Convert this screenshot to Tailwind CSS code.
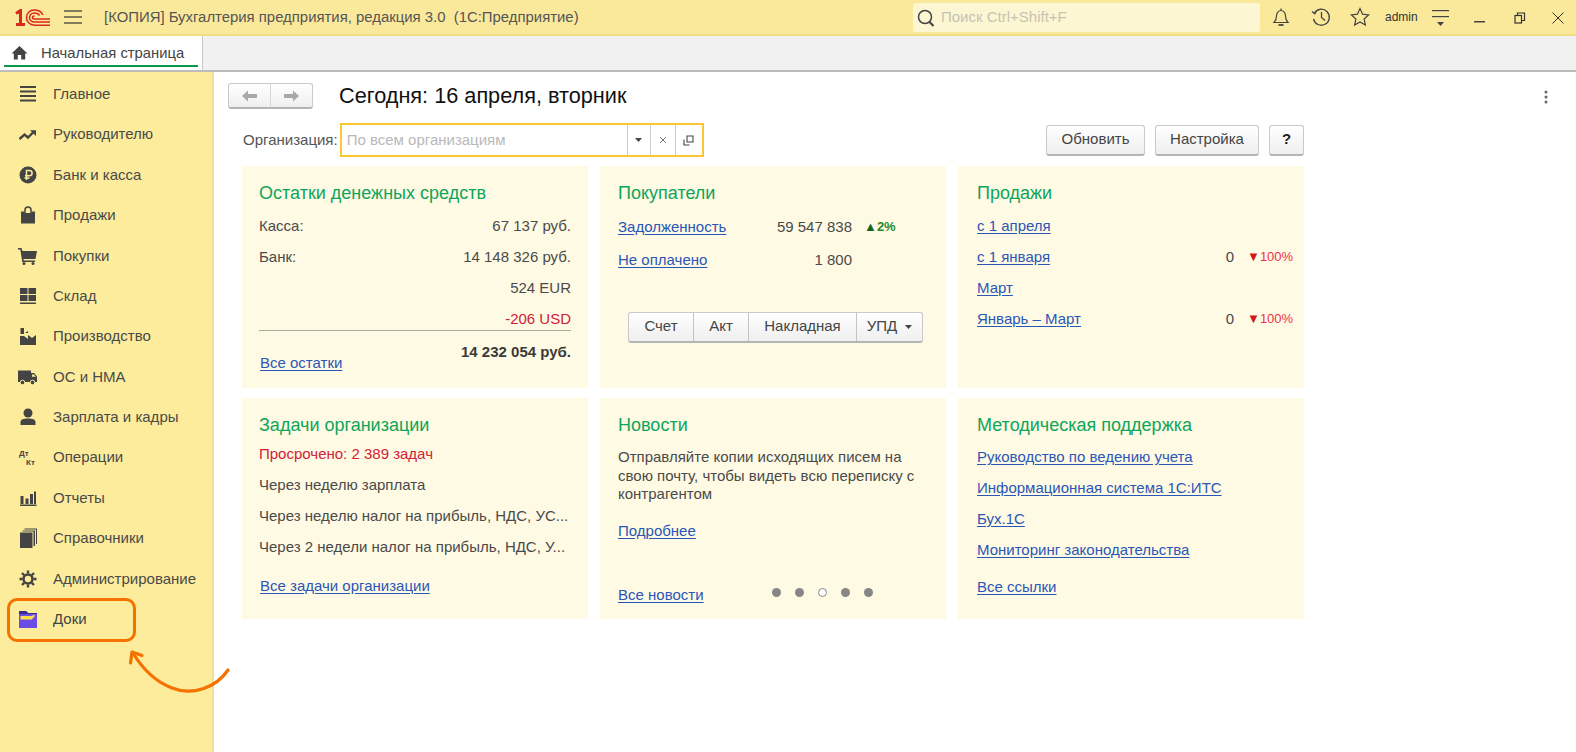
<!DOCTYPE html>
<html lang="ru">
<head>
    <meta charset="UTF-8">
    <title>Бухгалтерия предприятия</title>
    <script src="https://cdn.jsdelivr.net/npm/@tailwindcss/browser@4"></script>
</head>
<body class="relative w-[1576px] h-[752px] overflow-hidden bg-white font-['Liberation_Sans',Arial,sans-serif] text-[15px] text-[#4a4a4a]">

    <!-- шапка -->
    <header class="h-[36px] bg-[#fbe99b] border-b-2 border-[#efdc83] flex items-center">
        <svg class="ml-[15px] w-[35px] h-[17px]" viewBox="0 0 35 17" fill="none" stroke="#d9281e" stroke-width="1.500">
            <path d="M1 4.500L5.500 1.500V15M1 15.500h9" stroke-width="3"/>
            <path d="M28 6C26.500 3 23.500 1 19.500 1 14.500 1 11.500 4.500 11.500 8.500s3 7.700 8 7.700H35"/>
            <path d="M24.500 6.500c-1-1.500-2.800-2.500-5-2.500-3 0-5 2-5 4.500s2 4.500 5 4.500H35"/>
            <path d="M19.500 7c-1 0-2 .6-2 1.500s1 1.500 2 1.500H35"/>
        </svg>
        <svg class="ml-[14px] w-[18px] h-[14px]" viewBox="0 0 18 14" stroke="#5a5a48" stroke-width="1.500"><path d="M0 1h18M0 7h18M0 13h18"/></svg>
        <div class="ml-[22px] w-[800px] text-[14.900px] text-[#555] whitespace-pre">[КОПИЯ] Бухгалтерия предприятия, редакция 3.0  (1С:Предприятие)</div>
        <div class="absolute left-[913px] top-[3px] w-[347px] h-[29px] bg-[#fdf6d2] rounded-[3px] flex items-center">
            <svg class="ml-[3px] w-[20px] h-[20px]" viewBox="0 0 20 20" fill="none" stroke="#444" stroke-width="1.500"><circle cx="9" cy="9" r="6.500"/><path d="M13.500 14l4 4" stroke-width="2.200"/></svg>
            <span class="ml-[5px] text-[#c4c4b4]">Поиск Ctrl+Shift+F</span>
        </div>
        <svg class="absolute left-[1271px] top-[7px] w-[20px] h-[20px]" viewBox="0 0 20 20" fill="none" stroke="#444" stroke-width="1.200"><path d="M3 15.500h14c-2-2-2.500-3.500-2.500-6.500 0-3-2-5.500-4.500-5.500S5.500 6 5.500 9c0 3-.5 4.500-2.500 6.500z"/><path d="M10 1.500v2"/><path d="M7.500 18h5" stroke-width="1.800"/></svg>
        <svg class="absolute left-[1311px] top-[7px] w-[20px] h-[20px]" viewBox="0 0 20 20" fill="none" stroke="#444" stroke-width="1.300"><path d="M3.500 6A8 8 0 1 1 2.500 12"/><path d="M1 4.500l2.800 2.200L5.800 3.500" /><path d="M10.500 5v5.500l3.500 3"/></svg>
        <svg class="absolute left-[1350px] top-[7px] w-[20px] h-[20px]" viewBox="0 0 20 20" fill="none" stroke="#444" stroke-width="1.200"><path d="M10 1.500l2.600 5.700 6 .7-4.500 4.100 1.300 6.100L10 15l-5.400 3.100 1.300-6.100L1.400 7.900l6-.7z"/></svg>
        <span class="absolute left-[1385px] top-[9px] text-[12px] leading-[16px] text-[#333]">admin</span>
        <svg class="absolute left-[1431px] top-[9px] w-[20px] h-[20px]" viewBox="0 0 20 20" fill="#444"><rect x="1" y="1" width="17" height="1.200"/><rect x="1" y="7" width="17" height="1.200"/><path d="M6 13h7l-3.500 4z"/></svg>
        <svg class="absolute left-[1474px] top-[20px] w-[12px] h-[4px]" viewBox="0 0 12 4" fill="#444"><rect y="1" width="11" height="1.500"/></svg>
        <svg class="absolute left-[1514px] top-[12px] w-[12px] h-[12px]" viewBox="0 0 12 12" fill="none" stroke="#333" stroke-width="1.200"><rect x="1" y="3.500" width="6.500" height="7.500"/><path d="M3.500 3.500V1H10.500v7.500H7.500"/></svg>
        <svg class="absolute left-[1552px] top-[12px] w-[12px] h-[12px]" viewBox="0 0 12 12" stroke="#333" stroke-width="1"><path d="M.5.500l11 11M11.500.500l-11 11"/></svg>
    </header>

    <!-- вкладки -->
    <div class="h-[36px] bg-[#f1f1f1] border-b-2 border-[#bcbcbc] flex">
        <div class="w-[203px] h-[34px] bg-white border-r border-[#c8c8c8] relative flex items-center">
            <svg class="ml-[11px] -mt-[2px] w-[17px] h-[15px]" viewBox="0 0 17 15" fill="#444"><path d="M8.500 1L0.500 8.500h2.300V14.500h4V10h3.400v4.500h4V8.500h2.300z"/></svg>
            <span class="ml-[13px] text-[14.800px] text-[#444]">Начальная страница</span>
            <div class="absolute left-[4px] right-[4px] bottom-[3px] h-[2px] bg-[#0b9a4a]"></div>
        </div>
    </div>

    <div class="flex h-[680px]">
        <!-- панель разделов -->
        <nav class="w-[214px] shrink-0 bg-[#fcec9c] border-r-2 border-[#efe09a] pt-[2px]">
            <div class="h-[40.400px] flex items-center">
                <svg class="ml-[19px] w-[18px] h-[18px]" viewBox="0 0 18 18" fill="#444"><path d="M1 1h16v2H1zM1 5.500h16v2H1zM1 10h16v2H1zM1 14.500h16v2H1z"/></svg>
                <span class="ml-[16px]">Главное</span>
            </div>
            <div class="h-[40.400px] flex items-center">
                <svg class="ml-[19px] w-[18px] h-[18px]" viewBox="0 0 18 18" fill="none" stroke="#444" stroke-width="2.400"><path d="M0.500 13l5-4.500 3.500 3 6-6"/><path d="M11 4.200h6V10" fill="#444" stroke-width="0"/></svg>
                <span class="ml-[16px]">Руководителю</span>
            </div>
            <div class="h-[40.400px] flex items-center">
                <svg class="ml-[19px] w-[18px] h-[18px]" viewBox="0 0 18 18"><circle cx="9" cy="9" r="8.500" fill="#444"/><path d="M7.500 14V4.500h3a2.500 2.500 0 0 1 0 5.200h-4.500M5.500 12h5" fill="none" stroke="#fcec9c" stroke-width="1.500"/></svg>
                <span class="ml-[16px]">Банк и касса</span>
            </div>
            <div class="h-[40.400px] flex items-center">
                <svg class="ml-[19px] w-[18px] h-[18px]" viewBox="0 0 18 18"><path d="M2 5.500h3.500V7h7V5.500H16V17.500H2z" fill="#444"/><path d="M6 9V4a3 3 0 0 1 6 0v5" fill="none" stroke="#444" stroke-width="1.500"/></svg>
                <span class="ml-[16px]">Продажи</span>
            </div>
            <div class="h-[40.400px] flex items-center">
                <svg class="ml-[18px] w-[19px] h-[18px]" viewBox="0 0 19 18" fill="#444"><path d="M0 1h3.500l1 3H19l-1.500 8H5.500l.3 1.500H17V15H4.300L2.300 2.500H0z"/><circle cx="6" cy="16.500" r="1.500"/><circle cx="15" cy="16.500" r="1.500"/></svg>
                <span class="ml-[16px]">Покупки</span>
            </div>
            <div class="h-[40.400px] flex items-center">
                <svg class="ml-[19px] w-[18px] h-[18px]" viewBox="0 0 18 18" fill="#444"><path d="M1 1h7.500v6H1zM9.500 1H17v6H9.500zM1 8h7.500v6H1zM9.500 8H17v6H9.500zM1 15.500h16V17H1z"/></svg>
                <span class="ml-[16px]">Склад</span>
            </div>
            <div class="h-[40.400px] flex items-center">
                <svg class="ml-[19px] w-[18px] h-[18px]" viewBox="0 0 18 18" fill="#444"><path d="M1.500 0h3.500v6H1.500zM1 17V8h4l4 3V7l4 3 4-3v10z"/><path d="M6 5l3-2v2z"/></svg>
                <span class="ml-[16px]">Производство</span>
            </div>
            <div class="h-[40.400px] flex items-center">
                <svg class="ml-[18px] w-[19px] h-[18px]" viewBox="0 0 19 18"><path d="M0 2.500h13V5h3l3 3.500v5.500H0z" fill="#444"/><path d="M14 6.500h2l1.800 2.200H14z" fill="#fcec9c"/><circle cx="4.500" cy="14.500" r="2.300" fill="#444" stroke="#fcec9c"/><circle cx="14.500" cy="14.500" r="2.300" fill="#444" stroke="#fcec9c"/></svg>
                <span class="ml-[16px]">ОС и НМА</span>
            </div>
            <div class="h-[40.400px] flex items-center">
                <svg class="ml-[19px] w-[18px] h-[18px]" viewBox="0 0 18 18" fill="#444"><circle cx="9" cy="5" r="4.500"/><path d="M1.500 17v-3c0-2.500 3-3.500 7.500-3.500s7.500 1 7.500 3.500v3z"/></svg>
                <span class="ml-[16px]">Зарплата и кадры</span>
            </div>
            <div class="h-[40.400px] flex items-center">
                <div class="ml-[19px] w-[18px] h-[18px] relative text-[8px] leading-[8px] font-bold text-[#444]">
                    <span class="absolute left-0 top-[1px]">Дт</span>
                    <span class="absolute left-[7px] top-[10px]">Кт</span>
                </div>
                <span class="ml-[16px]">Операции</span>
            </div>
            <div class="h-[40.400px] flex items-center">
                <svg class="ml-[19px] w-[18px] h-[18px]" viewBox="0 0 18 18" fill="#444"><path d="M1.500 7h3v8h-3zM6.500 9.500h3V15h-3zM11 5h3v10h-3zM15 2.500h2V15h-2zM1 15.500h16.500V17H1z"/></svg>
                <span class="ml-[16px]">Отчеты</span>
            </div>
            <div class="h-[40.400px] flex items-center">
                <svg class="ml-[19px] w-[18px] h-[20px]" viewBox="0 0 18 20" fill="#444"><path d="M1 4.500h12.500V20H1z"/><path d="M14.500 3.500V18H16V2.500H3.500v1zM17 1.500V16h1V0.500H5.500v1z"/></svg>
                <span class="ml-[16px]">Справочники</span>
            </div>
            <div class="h-[40.400px] flex items-center">
                <svg class="ml-[19px] w-[18px] h-[18px]" viewBox="0 0 18 18" fill="none" stroke="#444"><circle cx="9" cy="9" r="4.500" stroke-width="2.600"/><path d="M9 0.500v3M9 14.500v3M0.500 9h3M14.500 9h3M3 3l2.200 2.200M12.800 12.800L15 15M15 3l-2.200 2.200M5.200 12.800L3 15" stroke-width="2.400"/></svg>
                <span class="ml-[16px]">Администрирование</span>
            </div>
            <div class="h-[40.400px] flex items-center">
                <svg class="ml-[19px] w-[18px] h-[18px]" viewBox="0 0 18 18"><path d="M0 1h7l2 2h9v15H0z" fill="#6a4de6"/><path d="M1.500 6h11l3-1.500v2.300l-3 2.700h-11z" fill="#fde047"/><path d="M0 1h7l2 2h9v1H0z" fill="#3b2c8f"/></svg>
                <span class="ml-[16px] text-[#444]">Доки</span>
            </div>
        </nav>

        <!-- рабочая область -->
        <main class="relative flex-1 pl-[14px] pt-[11px]">
            <div class="flex items-center h-[26px]">
                <div class="w-[85px] h-[26px] flex bg-linear-to-b from-white to-[#efefef] border border-[#c9c9c9] border-b-2 border-b-[#b4b4b4] rounded-[3px]">
                    <div class="flex-1 flex items-center justify-center border-r border-[#d8d8d8]">
                        <svg class="w-[15px] h-[12px]" viewBox="0 0 15 12" fill="#a8a8a8"><path d="M0 6l6-5.500V4h9v4H6v3.500z"/></svg>
                    </div>
                    <div class="flex-1 flex items-center justify-center">
                        <svg class="w-[15px] h-[12px]" viewBox="0 0 15 12" fill="#a8a8a8"><path d="M15 6L9 .500V4H0v4h9v3.500z"/></svg>
                    </div>
                </div>
                <h1 class="ml-[26px] text-[21.700px] leading-[26px] text-[#111]">Сегодня: 16 апреля, вторник</h1>
                <svg class="absolute left-[1329px] top-[17px] w-[6px] h-[16px]" viewBox="0 0 6 16" fill="#666"><circle cx="3" cy="3" r="1.500"/><circle cx="3" cy="8" r="1.500"/><circle cx="3" cy="13" r="1.500"/></svg>
            </div>

            <div class="flex items-center mt-[14px] h-[34px] w-[1076px]">
                <span class="ml-[15px] text-[#555]">Организация:</span>
                <div class="ml-[2px] w-[364px] h-[34px] border-2 border-[#fbc634] flex items-center">
                    <span class="ml-[5px] flex-1 text-[#b9b9b9]">По всем организациям</span>
                    <div class="w-[23px] h-full flex items-center justify-center border-l border-[#cfcfcf]">
                        <svg class="w-[7px] h-[4px]" viewBox="0 0 7 4" fill="#444"><path d="M0 0h7L3.500 4z"/></svg>
                    </div>
                    <div class="w-[25px] h-full flex items-center justify-center border-l border-[#cfcfcf]">
                        <svg class="w-[8px] h-[8px]" viewBox="0 0 8 8" stroke="#777" stroke-width="1"><path d="M1 1l6 6M7 1L1 7"/></svg>
                    </div>
                    <div class="w-[27px] h-full flex items-center justify-center border-l border-[#cfcfcf]">
                        <svg class="w-[11px] h-[11px]" viewBox="0 0 11 11" fill="none" stroke="#444" stroke-width="1.100"><path d="M1 4.500V10h5.500M4 7V1h6v6z"/></svg>
                    </div>
                </div>
                <button class="ml-auto w-[99px] h-[31px] bg-linear-to-b from-white to-[#efefef] border border-[#c9c9c9] border-b-2 border-b-[#b4b4b4] rounded-[3px] text-[#444]">Обновить</button>
                <button class="ml-[10px] w-[104px] h-[31px] bg-linear-to-b from-white to-[#efefef] border border-[#c9c9c9] border-b-2 border-b-[#b4b4b4] rounded-[3px] text-[#444]">Настройка</button>
                <button class="ml-[10px] w-[35px] h-[31px] bg-linear-to-b from-white to-[#efefef] border border-[#c9c9c9] border-b-2 border-b-[#b4b4b4] rounded-[3px] text-[#222] font-bold">?</button>
            </div>

            <div class="ml-[14px] mt-[9px] grid grid-cols-[346px_346px_346px] grid-rows-[222px_221px] gap-x-[12px] gap-y-[10px]">
                <!-- Остатки -->
                <section class="bg-[#fffae3] pt-[16px] px-[17px] flex flex-col">
                    <h2 class="text-[18px] leading-[22px] text-[#0ea55c] mb-[6.500px]">Остатки денежных средств</h2>
                    <div class="h-[31px] flex items-center justify-between"><span>Касса:</span><span>67 137 руб.</span></div>
                    <div class="h-[31px] flex items-center justify-between"><span>Банк:</span><span>14 148 326 руб.</span></div>
                    <div class="h-[31px] flex items-center justify-end"><span>524 EUR</span></div>
                    <div class="h-[26px] pt-[5px] flex items-center justify-end"><span class="text-[#d0213a]">-206 USD</span></div>
                    <div class="border-t border-[#a8a8a0] h-[38px] flex justify-between">
                        <a class="mt-[24px] ml-[1px] leading-[16px] text-[#2a56b8] underline underline-offset-2" href="#">Все остатки</a>
                        <b class="mt-[13px] leading-[16px] text-[#3a3a3a]">14 232 054 руб.</b>
                    </div>
                </section>

                <!-- Покупатели -->
                <section class="bg-[#fffae3] pt-[16px] px-[18px] flex flex-col">
                    <h2 class="text-[18px] leading-[22px] text-[#0ea55c] mb-[6.500px]">Покупатели</h2>
                    <div class="h-[33px] flex items-center">
                        <a class="w-[130px] text-[#2a56b8] underline underline-offset-2" href="#">Задолженность</a>
                        <span class="w-[104px] text-right">59 547 838</span>
                        <span class="ml-[12px] text-[13px] font-bold text-[#1f8a2c]"><span class="text-[#11661f]">▲</span>2%</span>
                    </div>
                    <div class="h-[33px] flex items-center">
                        <a class="w-[130px] text-[#2a56b8] underline underline-offset-2" href="#">Не оплачено</a>
                        <span class="w-[104px] text-right">1 800</span>
                    </div>
                    <div class="ml-[10px] mt-[35px] w-[295px] h-[31px] flex bg-linear-to-b from-white to-[#efefef] border border-[#c9c9c9] border-b-2 border-b-[#b4b4b4] rounded-[3px] text-[#444]">
                        <div class="w-[65px] flex items-center justify-center border-r border-[#c4c4c4]">Счет</div>
                        <div class="w-[55px] flex items-center justify-center border-r border-[#c4c4c4]">Акт</div>
                        <div class="w-[108px] flex items-center justify-center border-r border-[#c4c4c4]">Накладная</div>
                        <div class="flex-1 flex items-center justify-center gap-[8px]">УПД
                            <svg class="w-[7px] h-[4px]" viewBox="0 0 7 4" fill="#444"><path d="M0 0h7L3.500 4z"/></svg>
                        </div>
                    </div>
                </section>

                <!-- Продажи -->
                <section class="bg-[#fffae3] pt-[16px] pl-[19px] pr-[12px] flex flex-col">
                    <h2 class="text-[18px] leading-[22px] text-[#0ea55c] mb-[6.500px]">Продажи</h2>
                    <div class="h-[31px] flex items-center"><a class="text-[#2a56b8] underline underline-offset-2" href="#">с 1 апреля</a></div>
                    <div class="h-[31px] flex items-center justify-between">
                        <a class="text-[#2a56b8] underline underline-offset-2" href="#">с 1 января</a>
                        <span class="flex items-center"><span>0</span><span class="ml-[13px] w-[45px] whitespace-nowrap text-[13px] text-[#f0304a]"><span class="text-[#d01818]">▼</span>100%</span></span>
                    </div>
                    <div class="h-[31px] flex items-center"><a class="text-[#2a56b8] underline underline-offset-2" href="#">Март</a></div>
                    <div class="h-[31px] flex items-center justify-between">
                        <a class="text-[#2a56b8] underline underline-offset-2" href="#">Январь – Март</a>
                        <span class="flex items-center"><span>0</span><span class="ml-[13px] w-[45px] whitespace-nowrap text-[13px] text-[#f0304a]"><span class="text-[#d01818]">▼</span>100%</span></span>
                    </div>
                </section>

                <!-- Задачи -->
                <section class="bg-[#fffae3] pt-[16px] px-[17px] flex flex-col">
                    <h2 class="text-[18px] leading-[22px] text-[#0ea55c] mb-[3px]">Задачи организации</h2>
                    <div class="h-[31px] flex items-center text-[#d0213a]">Просрочено: 2 389 задач</div>
                    <div class="h-[31px] flex items-center">Через неделю зарплата</div>
                    <div class="h-[31px] flex items-center">Через неделю налог на прибыль, НДС, УС...</div>
                    <div class="h-[31px] flex items-center">Через 2 недели налог на прибыль, НДС, У...</div>
                    <a class="mt-[15px] ml-[1px] leading-[16px] text-[#2a56b8] underline underline-offset-2" href="#">Все задачи организации</a>
                </section>

                <!-- Новости -->
                <section class="bg-[#fffae3] pt-[16px] px-[18px] flex flex-col relative">
                    <h2 class="text-[18px] leading-[22px] text-[#0ea55c] mb-[12px]">Новости</h2>
                    <p class="leading-[18.700px] w-[310px]">Отправляйте копии исходящих писем на свою почту, чтобы видеть всю переписку с контрагентом</p>
                    <a class="mt-[19px] leading-[16px] text-[#2a56b8] underline underline-offset-2" href="#">Подробнее</a>
                    <div class="mt-[48px] flex items-center">
                        <a class="leading-[16px] text-[#2a56b8] underline underline-offset-2" href="#">Все новости</a>
                        <div class="ml-[68px] -mt-[5px] flex items-center gap-[14.200px]">
                            <span class="w-[9px] h-[9px] rounded-full bg-[#868686]"></span>
                            <span class="w-[9px] h-[9px] rounded-full bg-[#868686]"></span>
                            <span class="w-[9px] h-[9px] rounded-full bg-white border border-[#868686]"></span>
                            <span class="w-[9px] h-[9px] rounded-full bg-[#868686]"></span>
                            <span class="w-[9px] h-[9px] rounded-full bg-[#868686]"></span>
                        </div>
                    </div>
                </section>

                <!-- Методическая поддержка -->
                <section class="bg-[#fffae3] pt-[16px] px-[19px] flex flex-col">
                    <h2 class="text-[18px] leading-[22px] text-[#0ea55c] mb-[6px]">Методическая поддержка</h2>
                    <div class="h-[31px] flex items-center"><a class="text-[#2a56b8] underline underline-offset-2" href="#">Руководство по ведению учета</a></div>
                    <div class="h-[31px] flex items-center"><a class="text-[#2a56b8] underline underline-offset-2" href="#">Информационная система 1С:ИТС</a></div>
                    <div class="h-[31px] flex items-center"><a class="text-[#2a56b8] underline underline-offset-2" href="#">Бух.1С</a></div>
                    <div class="h-[31px] flex items-center"><a class="text-[#2a56b8] underline underline-offset-2" href="#">Мониторинг законодательства</a></div>
                    <a class="mt-[13px] leading-[16px] text-[#2a56b8] underline underline-offset-2" href="#">Все ссылки</a>
                </section>
            </div>
        </main>
    </div>

    <!-- выноска поверх панели -->
    <div class="absolute left-[7px] top-[598px] w-[129px] h-[44px] border-[3.500px] border-[#f47200] rounded-[10px]"></div>
    <svg class="absolute left-[120px] top-[640px] w-[120px] h-[60px]" viewBox="0 0 120 60" fill="none" stroke="#f47200" stroke-width="3.200" stroke-linecap="round" stroke-linejoin="round">
        <path d="M108 30C96 48 72 56 52 48 34 41 22 28 13 13"/>
        <path d="M10.500 23L12 12l10 3.500"/>
    </svg>
</body>
</html>
